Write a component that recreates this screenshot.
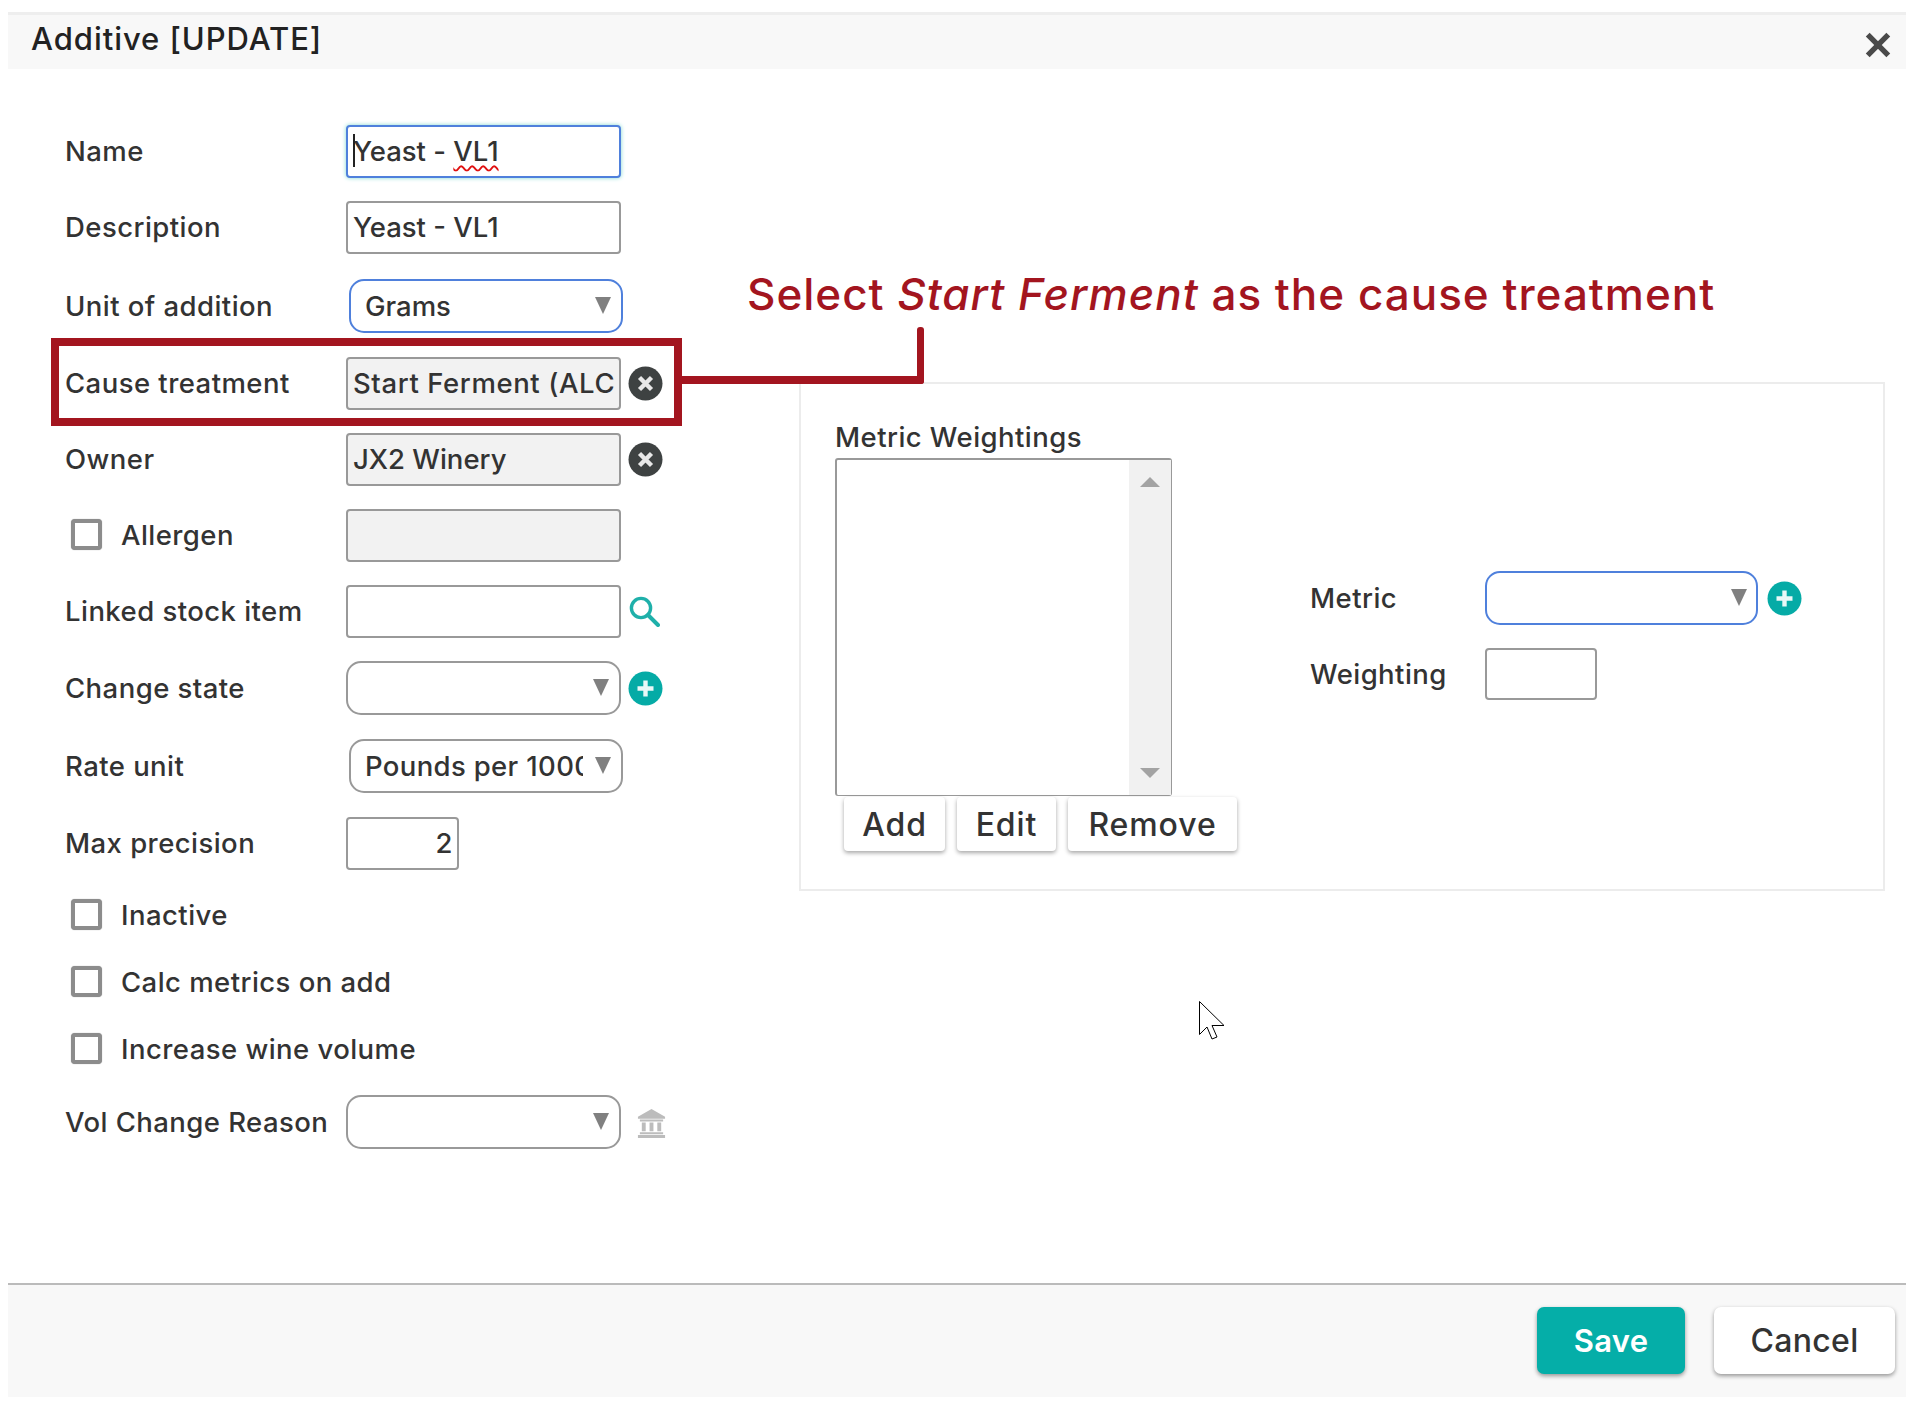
<div class="page">
  <div class="dialog">
    <header class="head">
      <h1>Additive [UPDATE]</h1>
      <button class="close" aria-label="Close">
        <svg viewBox="0 0 24 24" width="26" height="26"><path d="M2.5 2.5 L21.5 21.5 M21.5 2.5 L2.5 21.5" stroke="#4a4a4a" stroke-width="5"/></svg>
      </button>
    </header>

    <div class="body">
      <form class="form">
        <div class="row">
          <span class="lbl">Name</span>
          <div class="input focus tight"><span class="caret"></span>Yeast - <span class="misspelt">VL1</span></div>
        </div>
        <div class="row m23">
          <span class="lbl">Description</span>
          <input class="input tight" value="Yeast - VL1" spellcheck="false" />
        </div>
        <div class="row m25 tall">
          <span class="lbl">Unit of addition</span>
          <div class="select shift blue"><span class="val">Grams</span><i class="tri"></i></div>
        </div>
        <div class="row m24">
          <span class="lbl">Cause treatment</span>
          <input class="input off" value="Start Ferment (ALCOHOLIC)" spellcheck="false" readonly />
          <svg class="ico" viewBox="0 0 35 35"><circle cx="17.5" cy="17.5" r="17" fill="#3e4242"/><path d="M11.5 11.5 L23.5 23.5 M23.5 11.5 L11.5 23.5" stroke="#e8e8e8" stroke-width="4.4"/></svg>
        </div>
        <div class="row m23">
          <span class="lbl">Owner</span>
          <input class="input off tight" value="JX2 Winery" spellcheck="false" readonly />
          <svg class="ico" viewBox="0 0 35 35"><circle cx="17.5" cy="17.5" r="17" fill="#3e4242"/><path d="M11.5 11.5 L23.5 23.5 M23.5 11.5 L11.5 23.5" stroke="#e8e8e8" stroke-width="4.4"/></svg>
        </div>
        <div class="row m23">
          <label class="lbl chk"><span class="box"></span>Allergen</label>
          <input class="input off" spellcheck="false" readonly />
        </div>
        <div class="row m23">
          <span class="lbl">Linked stock item</span>
          <input class="input" spellcheck="false" />
          <svg class="ico search" viewBox="0 0 35 35"><circle cx="14" cy="14" r="9.6" fill="none" stroke="#1fb0aa" stroke-width="3.4"/><path d="M21 21 L31 31" stroke="#1fb0aa" stroke-width="4" stroke-linecap="round"/></svg>
        </div>
        <div class="row m23 tall">
          <span class="lbl">Change state</span>
          <div class="select"><i class="tri"></i></div>
          <svg class="ico" viewBox="0 0 35 35"><circle cx="17.5" cy="17.5" r="17" fill="#05aba6"/><path d="M17.5 9.5 V25.5 M9.5 17.5 H25.5" stroke="#e9f8f7" stroke-width="4.4"/></svg>
        </div>
        <div class="row m24 tall">
          <span class="lbl">Rate unit</span>
          <div class="select shift"><span class="val rate">Pounds per 1000 gallons</span><i class="tri"></i></div>
        </div>
        <div class="row m24">
          <span class="lbl">Max precision</span>
          <input class="input num" value="2" spellcheck="false" />
        </div>
        <div class="row m29 short">
          <label class="lbl chk"><span class="box"></span>Inactive</label>
        </div>
        <div class="row m36 short">
          <label class="lbl chk"><span class="box"></span>Calc metrics on add</label>
        </div>
        <div class="row m36 short">
          <label class="lbl chk"><span class="box"></span>Increase wine volume</label>
        </div>
        <div class="row m31 tall">
          <span class="lbl">Vol Change Reason</span>
          <div class="select"><i class="tri"></i></div>
          <svg class="ico bank" viewBox="0 0 32 32"><path d="M16 2 L30 10 V12 H2 V10 Z M4 13 H28 V15 H4 Z M6 16 H10 V25 H6 Z M14 16 H18 V25 H14 Z M22 16 H26 V25 H22 Z M4 26 H28 V28 H4 Z M2 29 H30 V32 H2 Z" fill="#bcbcbc"/></svg>
        </div>
      </form>

      <section class="panel">
        <div class="listcol">
          <div class="lbl wide">Metric Weightings</div>
          <div class="list">
            <div class="track">
              <i class="up"></i>
              <i class="down"></i>
            </div>
          </div>
          <div class="btns">
            <button class="btn add">Add</button>
            <button class="btn edit">Edit</button>
            <button class="btn rem">Remove</button>
          </div>
        </div>
        <div class="metric">
          <div class="mrow">
            <span class="lbl">Metric</span>
            <div class="select blue thin"><i class="tri"></i></div>
            <svg class="ico" viewBox="0 0 35 35"><circle cx="17.5" cy="17.5" r="17" fill="#05aba6"/><path d="M17.5 9.5 V25.5 M9.5 17.5 H25.5" stroke="#e9f8f7" stroke-width="4.4"/></svg>
          </div>
          <div class="mrow second">
            <span class="lbl">Weighting</span>
            <input class="input small" spellcheck="false" />
          </div>
        </div>
      </section>
    </div>

    <footer class="foot">
      <button class="act save">Save</button>
      <button class="act cancel">Cancel</button>
    </footer>
  </div>

  <div class="redbox"></div>
  <div class="redh"></div>
  <div class="redv"></div>
  <div class="callout">Select <em>Start Ferment</em> as the cause treatment</div>
  <svg class="cursor" viewBox="0 0 26 40" width="26" height="40"><path d="M0.5 0.5 V33.5 L8 26 L13 38 L18 36 L13 24.5 H25 Z" fill="#fff" stroke="#000" stroke-width="1"/></svg>
</div>

<style>
  :global(body) {
    margin: 0;
    background: #fff;
    font-family: Inter, "Liberation Sans", sans-serif;
    color: #333;
  }
  .page {
    position: relative;
    width: 1918px;
    height: 1411px;
    overflow: hidden;
    padding-top: 12px;
    box-sizing: border-box;
  }
  .dialog {
    width: 1898px;
    margin-left: 8px;
  }
  .head {
    height: 54px;
    background: #f8f8f8;
    border-top: 3px solid #eee;
    display: flex;
    align-items: center;
    justify-content: space-between;
  }
  h1 {
    margin: 0 0 7px 23px;
    font-size: 31px;
    font-weight: 500;
    color: #222;
    letter-spacing: 0.95px;
  }
  .close {
    border: 0;
    background: none;
    padding: 0;
    margin: 5px 15px 0 0;
    width: 26px;
    height: 26px;
    filter: blur(0.6px);
  }
  .body {
    height: 1214px;
    box-sizing: border-box;
    padding: 56px 0 0 57px;
    display: flex;
    align-items: flex-start;
  }
  .form {
    width: 734px;
    flex: none;
  }
  .row {
    display: flex;
    align-items: center;
    height: 53px;
  }
  .row.tall { height: 54px; }
  .row.short { height: 31px; }
  .row:not(.tall):not(.short) .lbl { margin-bottom: 2px; }
  .m23 { margin-top: 23px; }
  .m24 { margin-top: 24px; }
  .m25 { margin-top: 25px; }
  .m29 { margin-top: 29px; }
  .m31 { margin-top: 31px; }
  .m36 { margin-top: 36px; }
  .lbl {
    width: 281px;
    flex: none;
    font-size: 27.5px;
    font-weight: 500;
    color: #333;
    letter-spacing: 0.45px;
    white-space: nowrap;
  }
  .chk {
    display: flex;
    align-items: center;
  }
  .box {
    flex: none;
    width: 31px;
    height: 31px;
    box-sizing: border-box;
    border: 4px solid #8c8c8c;
    border-radius: 4px;
    margin: 0 19px 0 6px;
    background: #fff;
    box-shadow: 0 0 1px #999;
  }
  .input {
    width: 275px;
    height: 100%;
    box-sizing: border-box;
    border: 2px solid #999;
    border-radius: 4px;
    padding: 0 5px 2px;
    background: #fff;
    font: 500 27.5px Inter, "Liberation Sans", sans-serif;
    letter-spacing: 0.6px;
    color: #333;
    outline: none;
    flex: none;
    display: flex;
    align-items: center;
    white-space: pre;
  }
  .input.tight { letter-spacing: 0; }
  .input.focus {
    position: relative;
    border-color: #4f80dc;
    box-shadow: 0 0 4px #7fd8d0;
  }
  .caret {
    position: absolute;
    left: 5px;
    top: 7px;
    width: 2px;
    height: 33px;
    background: #222;
  }
  .misspelt {
    text-decoration: underline wavy #e01010 1.5px;
    text-underline-offset: 4px;
  }
  .input.off { background: #f2f2f2; }
  .input.num {
    width: 113px;
    text-align: right;
    padding-right: 4px;
  }
  .input.small {
    width: 112px;
    height: 52px;
  }
  .select {
    position: relative;
    width: 275px;
    height: 100%;
    box-sizing: border-box;
    border: 2px solid #999;
    border-radius: 15px;
    background: #fff;
    flex: none;
    display: flex;
    align-items: center;
  }
  .select.shift {
    margin-left: 3px;
    width: 274px;
  }
  .select.blue { border-color: #4f80dc; }
  .val {
    margin-left: 14px;
    width: 220px;
    overflow: hidden;
    white-space: nowrap;
    font-size: 27.5px;
    font-weight: 500;
    color: #333;
  }
  .val.rate {
    width: 218px;
    letter-spacing: 0.35px;
  }
  .tri {
    position: absolute;
    right: 10px;
    top: 16px;
    width: 0;
    height: 0;
    border-left: 8px solid transparent;
    border-right: 8px solid transparent;
    border-top: 17px solid #808080;
  }
  .ico {
    width: 35px;
    height: 35px;
    margin-left: 7px;
    flex: none;
    filter: blur(0.6px);
  }
  .ico.search { margin-left: 6px; }
  .ico.bank {
    width: 31px;
    height: 31px;
    margin-left: 15px;
  }
  .panel {
    width: 1086px;
    height: 509px;
    margin-top: 257px;
    box-sizing: border-box;
    border: 2px solid #ececec;
    padding: 38px 0 0 34px;
    display: flex;
    flex: none;
  }
  .listcol {
    width: 475px;
    flex: none;
  }
  .lbl.wide {
    width: auto;
    height: 36px;
    line-height: 30px;
  }
  .list {
    width: 337px;
    height: 338px;
    box-sizing: border-box;
    border: 1px solid #999;
    border-top-width: 2px;
    border-left-width: 2px;
    border-radius: 3px;
    display: flex;
    justify-content: flex-end;
  }
  .track {
    position: relative;
    width: 42px;
    background: #f1f1f1;
  }
  .up, .down {
    position: absolute;
    left: 11px;
    width: 0;
    height: 0;
    border-left: 10px solid transparent;
    border-right: 10px solid transparent;
  }
  .up {
    top: 17px;
    border-bottom: 10px solid #a3a3a3;
  }
  .down {
    bottom: 17px;
    border-top: 10px solid #a3a3a3;
  }
  .btns {
    display: flex;
    gap: 12px;
    margin: 1px 0 0 9px;
  }
  .btn {
    height: 54px;
    box-sizing: border-box;
    border: 0;
    border-radius: 4px;
    background: #fff;
    box-shadow: 0 2px 4px rgba(0, 0, 0, 0.35);
    font: 500 32px Inter, "Liberation Sans", sans-serif;
    letter-spacing: 0.9px;
    color: #333;
    padding: 0;
  }
  .add { width: 101px; }
  .edit { width: 99px; }
  .rem { width: 169px; }
  .metric {
    margin-top: 149px;
  }
  .mrow {
    display: flex;
    align-items: center;
    height: 54px;
  }
  .mrow .lbl { width: 175px; }
  .mrow.second {
    margin-top: 23px;
    height: 52px;
  }
  .select.thin {
    width: 273px;
    height: 54px;
  }
  .select.thin .tri { right: 9px; }
  .mrow .ico { margin-left: 9px; }
  .foot {
    height: 114px;
    box-sizing: border-box;
    background: #f8f8f8;
    border-top: 2px solid #bbb;
    display: flex;
    justify-content: flex-end;
    align-items: flex-start;
    gap: 29px;
    padding: 22px 11px 0 0;
  }
  .act {
    height: 67px;
    border: 0;
    border-radius: 7px;
    font: 500 32px Inter, "Liberation Sans", sans-serif;
    letter-spacing: 0.3px;
    padding: 0;
    box-shadow: 0 2px 4px rgba(0, 0, 0, 0.4);
  }
  .save {
    width: 148px;
    background: #05aea8;
    color: #fff;
    font-size: 31px;
    font-weight: 600;
  }
  .cancel {
    width: 181px;
    background: #fff;
    color: #333;
  }
  .redbox {
    position: absolute;
    left: 51px;
    top: 338px;
    width: 631px;
    height: 88px;
    box-sizing: border-box;
    border: 8px solid #a3151f;
  }
  .redh {
    position: absolute;
    left: 682px;
    top: 376px;
    width: 242px;
    height: 8px;
    background: #a3151f;
    border-radius: 0 0 3px 0;
  }
  .redv {
    position: absolute;
    left: 917px;
    top: 327px;
    width: 7px;
    height: 57px;
    background: #a3151f;
    border-radius: 3px 3px 3px 0;
  }
  .callout {
    position: absolute;
    left: 747px;
    top: 266px;
    font-size: 44px;
    line-height: 56px;
    font-weight: 500;
    letter-spacing: 1px;
    color: #a3151f;
    white-space: pre;
  }
  .cursor {
    position: absolute;
    left: 1199px;
    top: 1001px;
  }
</style>
